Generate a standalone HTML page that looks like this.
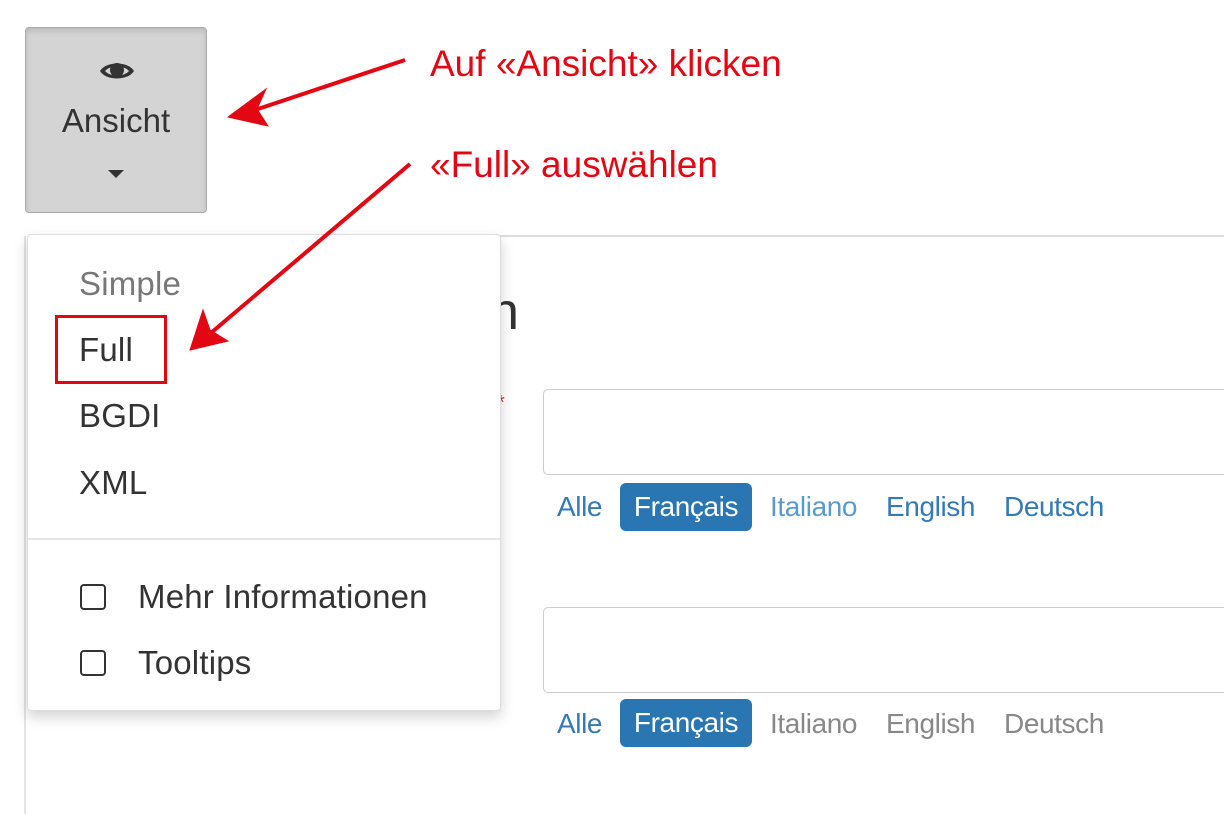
<!DOCTYPE html>
<html><head><meta charset="utf-8"><style>
body{margin:0;width:1224px;height:814px;background:#fff;position:relative;overflow:hidden;font-family:"Liberation Sans",sans-serif}
.a{position:absolute}
.btn{left:25px;top:27px;width:180px;height:184px;background:#d4d4d4;border:1px solid #aaa;border-radius:4px;box-shadow:inset 0 3px 6px rgba(0,0,0,.12)}
.menu{left:27px;top:234px;width:472px;height:475px;background:#fff;border:1px solid #ddd;border-radius:4px;box-shadow:0 6px 14px rgba(0,0,0,.18)}
.mi{position:absolute;left:51px;font-size:33px;color:#333;letter-spacing:0.2px}
.inp{left:543px;width:700px;border:1.5px solid #ccc;border-radius:5px}
.tab{position:absolute;font-size:28px;color:#337ab7;letter-spacing:-0.4px}
.pill{position:absolute;background:#2a76b3;color:#fff;border-radius:6px;font-size:28px;text-align:center;letter-spacing:-0.4px}
.ann{color:#e30613;font-size:37px;position:absolute}
.cb{position:absolute;left:52px;width:22px;height:22px;border:2px solid #333;border-radius:4px}
</style></head><body>
<div class="a" style="left:500px;top:235px;width:724px;height:2px;background:#ddd"></div>
<div class="a" style="left:24px;top:236px;width:2px;height:578px;background:#e4e4e4"></div>
<div class="a" style="left:490px;top:282px;font-size:52px;color:#333">n</div>
<div class="a" style="left:497px;top:392px;font-size:20px;color:#c33">*</div>
<div class="a inp" style="top:389px;height:84px"></div>
<div class="a inp" style="top:607px;height:84px"></div>
<div class="tab" style="left:557px;top:491px">Alle</div>
<div class="pill" style="left:620px;top:483px;width:132px;height:48px;line-height:48px">Français</div>
<div class="tab" style="left:770px;top:491px;color:#5b9bcc">Italiano</div>
<div class="tab" style="left:886px;top:491px">English</div>
<div class="tab" style="left:1004px;top:491px">Deutsch</div>
<div class="tab" style="left:557px;top:708px">Alle</div>
<div class="pill" style="left:620px;top:699px;width:132px;height:48px;line-height:48px">Français</div>
<div class="tab" style="left:770px;top:708px;color:#888">Italiano</div>
<div class="tab" style="left:886px;top:708px;color:#888">English</div>
<div class="tab" style="left:1004px;top:708px;color:#888">Deutsch</div>
<div class="a btn">
<svg class="a" style="left:72px;top:30px" width="38" height="26" viewBox="0 0 38 26"><path d="M2 13C8 3 30 3 36 13C30 23 8 23 2 13Z" fill="#333"/><path d="M7 13C12 7 26 7 31 13C26 19 12 19 7 13Z" fill="#d4d4d4"/><circle cx="19" cy="12" r="7" fill="#333"/></svg>
<div class="a" style="left:0;width:180px;top:74px;text-align:center;font-size:33px;color:#333">Ansicht</div>
<svg class="a" style="left:82px;top:142px" width="16" height="9"><path d="M0 0H16L8 8Z" fill="#333"/></svg>
</div>
<div class="a menu">
<div class="mi" style="top:30px;color:#777">Simple</div>
<div class="mi" style="top:96px">Full</div>
<div class="mi" style="top:162px">BGDI</div>
<div class="mi" style="top:229px">XML</div>
<div class="a" style="left:0;top:303px;width:472px;height:2px;background:#e5e5e5"></div>
<div class="cb" style="top:349px"></div><div class="mi" style="left:110px;top:343px">Mehr Informationen</div>
<div class="cb" style="top:415px"></div><div class="mi" style="left:110px;top:409px">Tooltips</div>
</div>
<div class="a" style="left:55px;top:315px;width:106px;height:63px;border:3px solid #e30613"></div>
<div class="ann" style="left:430px;top:43px">Auf «Ansicht» klicken</div>
<div class="ann" style="left:430px;top:144px">«Full» auswählen</div>
<svg class="a" style="left:0;top:0" width="1224" height="814"><g fill="#e30613" stroke="#e30613" stroke-width="4">
<line x1="405" y1="60" x2="255" y2="110"/><path d="M228 117L266 89L257 109L268 126Z" stroke-width="1"/>
<line x1="410" y1="164" x2="205" y2="338"/><path d="M190 350L203 310L210 330L228 341Z" stroke-width="1"/></g></svg>
</body></html>
